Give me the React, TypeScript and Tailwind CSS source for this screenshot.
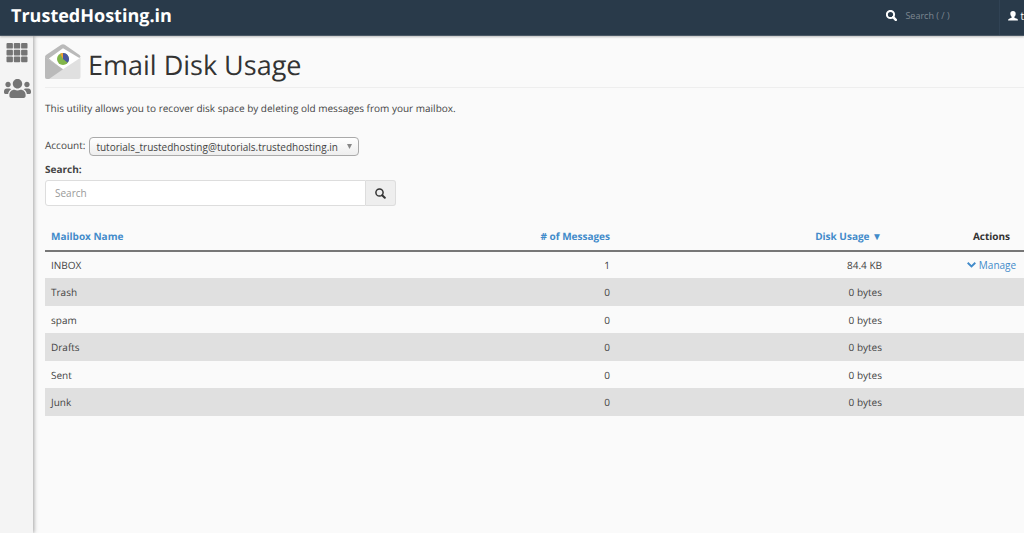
import { FaUsers } from 'react-icons/fa';

const mailboxes = [
  { name: 'INBOX', messages: 1, usage: '84.4 KB', manage: true },
  { name: 'Trash', messages: 0, usage: '0 bytes' },
  { name: 'spam', messages: 0, usage: '0 bytes' },
  { name: 'Drafts', messages: 0, usage: '0 bytes' },
  { name: 'Sent', messages: 0, usage: '0 bytes' },
  { name: 'Junk', messages: 0, usage: '0 bytes' },
];

function GridIcon() {
  return (
    <svg width="22" height="20" viewBox="0 0 22 20" fill="currentColor">
      {[0, 6.8, 13.6].map(y =>
        [0.5, 7.8, 15.1].map(x => <rect key={`${x}-${y}`} x={x} y={y} width="6.4" height="5.6" rx="0.9" />)
      )}
    </svg>
  );
}

function SearchIcon({ strokeWidth = 1.5 }: { strokeWidth?: number }) {
  return (
    <svg width="11" height="11" viewBox="0 0 11 11" fill="none" stroke="currentColor" strokeWidth={strokeWidth}>
      <circle cx="4.5" cy="4.5" r="3.6" />
      <path d="M7.2 7.2L9.8 9.8" strokeWidth={strokeWidth + 0.5} strokeLinecap="round" />
    </svg>
  );
}

function UserIcon() {
  return (
    <svg width="10" height="10" viewBox="0 0 10 10" fill="currentColor">
      <path d="M5 0C6.8 0 7.7 1.1 7.7 2.7C7.7 4.2 7 5.2 6.4 5.8V6.7C7.6 7.3 9.5 7.6 9.9 8.7V9.6H0.1V8.7C0.5 7.6 2.4 7.3 3.6 6.7V5.8C3 5.2 2.3 4.2 2.3 2.7C2.3 1.1 3.2 0 5 0Z" />
    </svg>
  );
}

function MailUsageIcon() {
  return (
    <svg width="36" height="36" viewBox="0 0 36 36">
      <path d="M0 13Q0 11.6 1 10.9L16.2 0.8Q18 -0.4 19.8 0.8L34.5 10.9Q35.5 11.6 35.5 13L18 25L0 15Z" fill="#bababa" />
      <path d="M3.8 14.6L18 4.2L34.8 14.2L18 25.8Z" fill="#fff" />
      <path d="M0 13L18 25.2L35.5 13.8V33Q35.5 35 33.5 35H2Q0 35 0 33Z" fill="#e0e0e0" />
      <path d="M0 13L18 25.2L4 35H2Q0 35 0 33Z" fill="#bababa" />
      <circle cx="18" cy="15" r="6" fill="#82b54b" />
      <path d="M18 15V9A6 6 0 0 1 22.7 18.7Z" fill="#4a57a0" />
      <path d="M18 15V9A6 6 0 0 0 15.2 9.7Z" fill="#f0a030" />
    </svg>
  );
}

export default function App() {
  return (
    <div className="min-h-screen flex flex-col overflow-x-hidden bg-[#fafafa] font-['Open_Sans',sans-serif] text-[10px] leading-4 text-[#444] [text-rendering:geometricPrecision]">
      <header className="relative z-10 h-9 shrink-0 flex items-center justify-between bg-[#293a4a] border-b border-[#4a5865] shadow-[0_1px_2px_rgba(0,0,0,0.25)]">
        <a href="#" className="pl-[11px] pb-1 text-[18px] leading-6 font-bold text-white">TrustedHosting.in</a>
        <div className="h-full pb-1 flex items-center text-white">
          <label htmlFor="quick-search" aria-label="Search" className="mr-2">
            <SearchIcon strokeWidth={2} />
          </label>
          <input
            id="quick-search"
            placeholder="Search ( / )"
            className="w-[94px] bg-transparent text-[9px] outline-none placeholder:text-[#7d8791]"
          />
          <button className="-mb-1 h-[35px] pb-1 pl-2 flex items-center gap-[2px] border-l border-[#304254]">
            <UserIcon />
            t
          </button>
        </div>
      </header>

      <div className="flex flex-1">
        <nav className="w-[33px] shrink-0 flex flex-col items-center gap-3 pt-[7px] pl-px bg-[#f4f4f4] text-[#757575] shadow-[1px_0_4px_rgba(0,0,0,0.35)]">
          <a href="#" aria-label="Home"><GridIcon /></a>
          <a href="#" aria-label="User Manager"><FaUsers size={27} /></a>
        </nav>

        <main className="flex-1 pl-3 pt-2">
          <h1 className="h-11 flex items-start gap-[7px] border-b border-[#eee] text-[27px] leading-[42px] font-normal text-[#333]">
            <MailUsageIcon />
            Email Disk Usage
          </h1>
          <p className="mt-3">
            This utility allows you to recover disk space by deleting old messages from your mailbox.
          </p>

          <div className="mt-[19px] flex items-start">
            <label htmlFor="account" className="pt-[2px]">Account:</label>
            <div className="relative ml-1 mt-[2px]">
              <select
                id="account"
                className="block w-[270px] h-[19px] pl-[6px] appearance-none rounded border border-[#aaa] bg-linear-to-b from-white to-[#eee] text-[#444] outline-none"
              >
                <option>tutorials_trustedhosting@tutorials.trustedhosting.in</option>
              </select>
              <svg width="5" height="5" viewBox="0 0 5 5" className="absolute right-[7px] top-[7px] pointer-events-none">
                <path d="M0 0H5L2.5 5Z" fill="#888" />
              </svg>
            </div>
          </div>

          <label htmlFor="search" className="block mt-[5px] font-bold">Search:</label>
          <div className="mt-[3px] flex w-[351px] h-[26px]">
            <input
              id="search"
              placeholder="Search"
              className="flex-1 min-w-0 px-[9px] rounded-l-[3px] border border-[#ddd] bg-white outline-none placeholder:text-[#999]"
            />
            <button
              aria-label="Search"
              className="w-[30px] flex items-center justify-center rounded-r-[3px] border border-l-0 border-[#ddd] bg-[#eee] text-[#333]"
            >
              <SearchIcon />
            </button>
          </div>

          <table className="w-full mt-[15px] table-fixed">
            <thead>
              <tr className="h-[30px] border-b-2 border-[#777] text-[#428bca]">
                <th className="px-[6px] text-left font-bold"><a href="#">Mailbox Name</a></th>
                <th className="w-[28%] px-[6px] text-right font-bold"><a href="#"># of Messages</a></th>
                <th className="w-[272px] px-[6px] text-right font-bold"><a href="#">Disk Usage ▼</a></th>
                <th className="w-[136px] pl-[71px] text-center font-bold text-[#333]">Actions</th>
              </tr>
            </thead>
            <tbody>
              {mailboxes.map(box => (
                <tr key={box.name} className="h-[27px] even:h-7 even:bg-[#e0e0e0]">
                  <td className="px-[6px]">{box.name}</td>
                  <td className="px-[6px] text-right">{box.messages}</td>
                  <td className="px-[6px] text-right">{box.usage}</td>
                  <td className="pl-[71px] text-[#428bca]">
                    {box.manage && (
                      <button className="flex w-full items-center justify-center gap-[3px]">
                        <svg width="9" height="6" viewBox="0 0 9 6" fill="none" stroke="currentColor" strokeWidth="1.9">
                          <path d="M0.7 0.8L4.5 4.4L8.3 0.8" />
                        </svg>
                        Manage
                      </button>
                    )}
                  </td>
                </tr>
              ))}
            </tbody>
          </table>
        </main>
      </div>
    </div>
  );
}
